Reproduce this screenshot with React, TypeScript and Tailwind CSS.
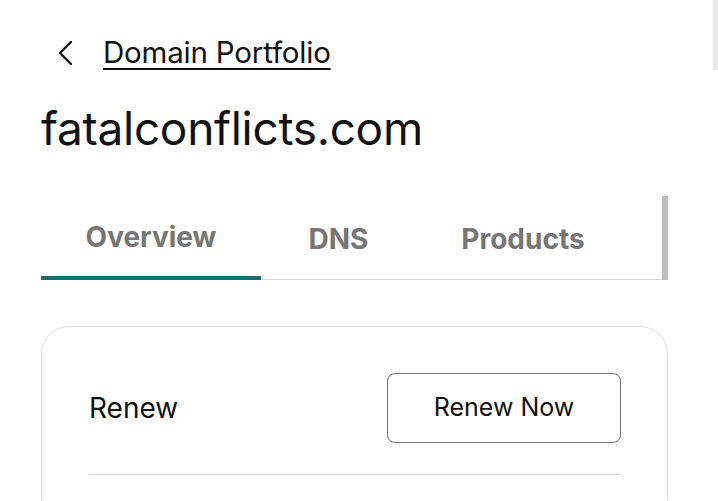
import React from "react";

export default function App() {
  return (
    <div className="relative w-[718px] h-[501px] overflow-hidden bg-white text-[#111111]" style={{ fontFamily: "Inter, 'Noto Sans', sans-serif" }}>
      <div className="absolute right-0 top-0 w-[5px] h-[70px] bg-[#e8e8e8]" />
      <div className="pl-[41px] pr-[50px]">
        <div className="flex items-center h-[30px] mt-[38px]">
          <svg className="ml-[15px]" width="17" height="26" viewBox="0 0 17 26" fill="none">
            <path d="M15 2 L4 13 L15 24" stroke="#111" strokeWidth="2.4" strokeLinecap="round" strokeLinejoin="round" />
          </svg>
          <span className="ml-[30px] text-[29.5px] leading-none underline decoration-2 underline-offset-[5px] tracking-[-0.2px]">Domain Portfolio</span>
        </div>
        <div className="mt-[34px] text-[46px] leading-[52px] tracking-[-0.3px]">fatalconflicts.com</div>
        <div className="mt-[42px] w-[627px] h-[84px] flex items-stretch border-b border-[#d6d6d6] relative">
          <div className="w-[220px] flex items-center justify-center text-[28px] font-bold text-[#767676] border-b-4 border-[#1e6b6b] -mb-px pt-[1px]">Overview</div>
          <div className="w-[155px] flex items-center justify-center text-[28px] font-bold text-[#767676] pt-[3px]">DNS</div>
          <div className="w-[214px] flex items-center justify-center text-[28px] font-bold text-[#767676] pt-[3px]">Products</div>
          <div className="absolute right-0 top-0 w-[6px] h-[84px] bg-[#bdbdbd]" />
        </div>
        <div className="mt-[46px] w-[627px] h-[200px] rounded-[28px] border border-[#e0e0e0] px-[46px] pt-[46px]">
          <div className="flex items-center justify-between pl-[1px]">
            <span className="text-[28px]">Renew</span>
            <button className="w-[234px] h-[70px] rounded-[8px] border border-[#767676] text-[25px] flex items-center justify-center">Renew Now</button>
          </div>
          <div className="mt-[31px] h-px bg-[#dcdcdc] ml-[1px]" />
        </div>
      </div>
    </div>
  );
}
